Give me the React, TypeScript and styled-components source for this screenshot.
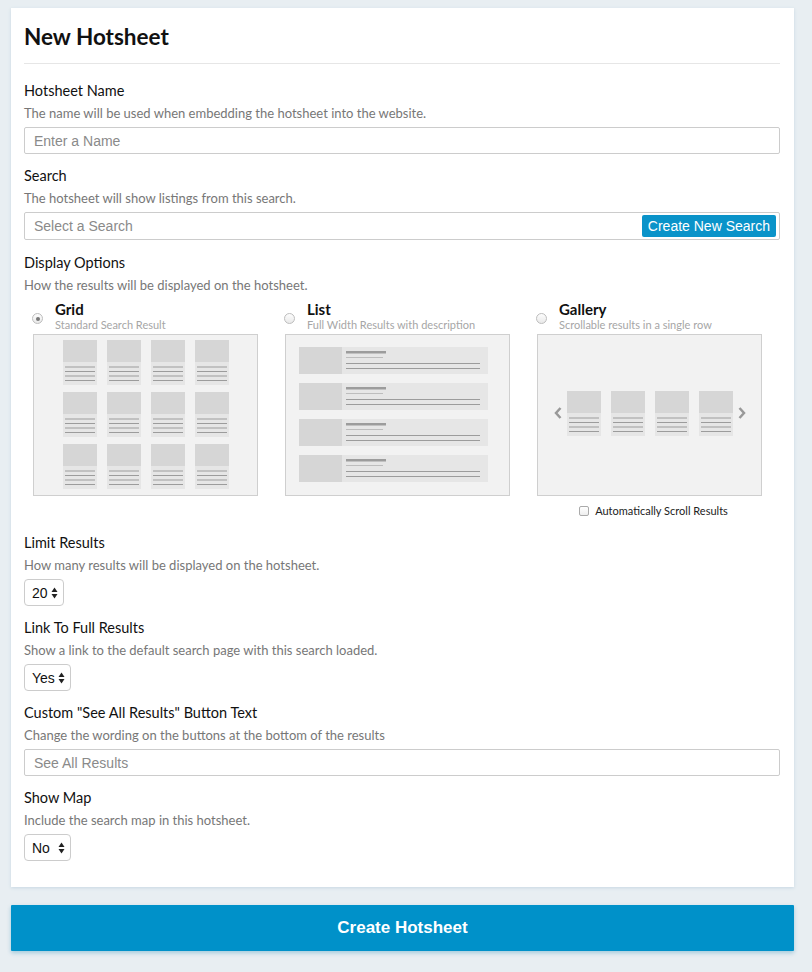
import styled, { createGlobalStyle } from "styled-components";

const GlobalStyle = createGlobalStyle`
  body {
    margin: 0;
    background: #e8eef2;
    font-family: Lato, "Noto Sans", sans-serif;
    color: #111;
  }
`;

const SANS = `"Liberation Sans", Arial, sans-serif`;

type Layout = "grid" | "list" | "gallery";

const options: { key: Layout; title: string; sub: string }[] = [
  { key: "grid", title: "Grid", sub: "Standard Search Result" },
  { key: "list", title: "List", sub: "Full Width Results with description" },
  { key: "gallery", title: "Gallery", sub: "Scrollable results in a single row" },
];

// one result card in the grid / gallery thumbnails
const Tile = ({ x, y }: { x: number; y: number }) => (
  <g>
    <rect x={x} y={y} width={34} height={22} fill="#d6d6d6" />
    <rect x={x} y={y + 22} width={34} height={23} fill="#e6e6e6" />
    {[27, 31.5, 36, 40.5].map((o) => (
      <line key={o} x1={x + 2} x2={x + 32} y1={y + o} y2={y + o} stroke="#9c9c9c" strokeWidth={1} />
    ))}
  </g>
);

const GridPreview = () => (
  <svg width="223" height="160" viewBox="0 0 223 160">
    {[5, 57, 109].map((y) =>
      [29, 73, 117, 161].map((x) => <Tile key={`${x}-${y}`} x={x} y={y} />)
    )}
  </svg>
);

const ListPreview = () => (
  <svg width="223" height="160" viewBox="0 0 223 160">
    {[12, 48, 84, 120].map((y) => (
      <g key={y}>
        <rect x={13} y={y} width={189} height={27} fill="#e6e6e6" />
        <rect x={13} y={y} width={43} height={27} fill="#d6d6d6" />
        <rect x={60} y={y + 4} width={40} height={2.5} fill="#9c9c9c" />
        <line x1={60} x2={97} y1={y + 10.5} y2={y + 10.5} stroke="#bdbdbd" />
        <line x1={60} x2={194} y1={y + 16.5} y2={y + 16.5} stroke="#9c9c9c" />
        <line x1={60} x2={194} y1={y + 21.5} y2={y + 21.5} stroke="#9c9c9c" />
      </g>
    ))}
  </svg>
);

const GalleryPreview = () => (
  <svg width="223" height="160" viewBox="0 0 223 160">
    <polyline points="22.5,73 18,78 22.5,83" fill="none" stroke="#999" strokeWidth={2.5} />
    <polyline points="201.5,73 206,78 201.5,83" fill="none" stroke="#999" strokeWidth={2.5} />
    {[29, 73, 117, 161].map((x) => (
      <Tile key={x} x={x} y={56} />
    ))}
  </svg>
);

const previews: Record<Layout, () => JSX.Element> = {
  grid: GridPreview,
  list: ListPreview,
  gallery: GalleryPreview,
};

const SelectArrows = () => (
  <svg width="7" height="12" viewBox="0 0 7 12">
    <path d="M3.5 0.5 L6.5 5 L0.5 5 Z" fill="#222" />
    <path d="M3.5 11.5 L6.5 7 L0.5 7 Z" fill="#222" />
  </svg>
);

const FakeSelect = ({ value, width }: { value: string; width: number }) => (
  <SelectBox $width={width}>
    <span>{value}</span>
    <SelectArrows />
  </SelectBox>
);

export default function App() {
  return (
    <>
      <GlobalStyle />
      <Page>
        <Card>
          <Title>New Hotsheet</Title>

          <Field>
            <Label>Hotsheet Name</Label>
            <Desc>The name will be used when embedding the hotsheet into the website.</Desc>
            <TextInput placeholder="Enter a Name" />
          </Field>

          <Field>
            <Label>Search</Label>
            <Desc>The hotsheet will show listings from this search.</Desc>
            <SearchBox>
              <SearchPlaceholder>Select a Search</SearchPlaceholder>
              <NewSearchBtn>Create New Search</NewSearchBtn>
            </SearchBox>
          </Field>

          <Field $extra={1}>
            <Label>Display Options</Label>
            <Desc>How the results will be displayed on the hotsheet.</Desc>
            <OptionRow>
              {options.map((o) => {
                const Preview = previews[o.key];
                return (
                  <Option key={o.key}>
                    <OptionHead>
                      <Radio $checked={o.key === "grid"} />
                      <div>
                        <OptionTitle>{o.title}</OptionTitle>
                        <OptionSub>{o.sub}</OptionSub>
                      </div>
                    </OptionHead>
                    <PreviewBox>
                      <Preview />
                    </PreviewBox>
                    {o.key === "gallery" && (
                      <CheckRow>
                        <CheckBox />
                        Automatically Scroll Results
                      </CheckRow>
                    )}
                  </Option>
                );
              })}
            </OptionRow>
          </Field>

          <Field $extra={2}>
            <Label>Limit Results</Label>
            <Desc>How many results will be displayed on the hotsheet.</Desc>
            <FakeSelect value="20" width={40} />
          </Field>

          <Field>
            <Label>Link To Full Results</Label>
            <Desc>Show a link to the default search page with this search loaded.</Desc>
            <FakeSelect value="Yes" width={47} />
          </Field>

          <Field>
            <Label>Custom "See All Results" Button Text</Label>
            <Desc>Change the wording on the buttons at the bottom of the results</Desc>
            <TextInput placeholder="See All Results" />
          </Field>

          <Field>
            <Label>Show Map</Label>
            <Desc>Include the search map in this hotsheet.</Desc>
            <FakeSelect value="No" width={47} />
          </Field>
        </Card>

        <SubmitBtn>Create Hotsheet</SubmitBtn>
      </Page>
    </>
  );
}

const Page = styled.div`
  padding: 8px 18px 21px 11px;
`;

const Card = styled.div`
  background: #fff;
  padding: 15px 14px 26px 13px;
  box-shadow: 0 1px 3px rgba(160, 190, 210, 0.45);
`;

const Title = styled.h1`
  margin: 0 0 17px;
  padding-bottom: 12px;
  font-size: 22.5px;
  line-height: 28px;
  font-weight: 700;
  color: #111;
  border-bottom: 1px solid #e6e6e6;
`;

const Field = styled.div<{ $extra?: number }>`
  margin-top: ${(p) => 12 + (p.$extra || 0)}px;
`;

const Label = styled.div`
  font-size: 14.5px;
  line-height: 20px;
  color: #111;
`;

const Desc = styled.div`
  margin-top: 3px;
  margin-bottom: 5px;
  font-size: 13px;
  line-height: 18px;
  color: #777;
`;

const TextInput = styled.input`
  box-sizing: border-box;
  display: block;
  width: 100%;
  height: 27px;
  border: 1px solid #ccc;
  border-radius: 2px;
  padding: 0 9px;
  font-family: ${SANS};
  font-size: 14px;
  outline: none;
  &::placeholder {
    color: #8a8a8a;
  }
`;

const SearchBox = styled.div`
  box-sizing: border-box;
  display: flex;
  align-items: center;
  justify-content: space-between;
  height: 28px;
  border: 1px solid #ccc;
  border-radius: 2px;
  padding: 0 3px 0 9px;
`;

const SearchPlaceholder = styled.span`
  font-family: ${SANS};
  font-size: 14px;
  color: #8a8a8a;
`;

const NewSearchBtn = styled.button`
  height: 22px;
  padding: 0 6px;
  border: none;
  border-radius: 2px;
  background: #0a93c9;
  color: #fff;
  font-family: ${SANS};
  font-size: 14px;
`;

const OptionRow = styled.div`
  display: grid;
  grid-template-columns: repeat(3, 225px);
  column-gap: 27px;
  padding-left: 9px;
  margin-top: 7px;
`;

const Option = styled.div`
  display: flex;
  flex-direction: column;
`;

const OptionHead = styled.div`
  display: flex;
  align-items: flex-end;
  gap: 12px;
  margin-left: -1px;
`;

const Radio = styled.span<{ $checked: boolean }>`
  box-sizing: border-box;
  position: relative;
  flex: none;
  width: 11px;
  height: 11px;
  margin-bottom: 7px;
  border-radius: 50%;
  border: 1px solid #bdbdbd;
  background: linear-gradient(#fdfdfd, #e9e9e9);
  &::after {
    content: "";
    display: ${(p) => (p.$checked ? "block" : "none")};
    position: absolute;
    left: 2.5px;
    top: 2.5px;
    width: 4px;
    height: 4px;
    border-radius: 50%;
    background: #777;
  }
`;

const OptionTitle = styled.div`
  font-size: 15px;
  line-height: 16px;
  font-weight: 700;
  color: #111;
`;

const OptionSub = styled.div`
  margin-top: 2px;
  font-size: 11px;
  line-height: 12px;
  color: #a6a6a6;
`;

const PreviewBox = styled.div`
  margin-top: 3px;
  width: 225px;
  height: 162px;
  box-sizing: border-box;
  border: 1px solid #cfcfcf;
  background: #f2f2f2;
  svg {
    display: block;
  }
`;

const CheckRow = styled.label`
  display: flex;
  align-items: center;
  justify-content: center;
  gap: 6px;
  margin-top: 7px;
  padding-left: 8px;
  font-size: 11px;
  line-height: 16px;
  color: #222;
`;

const CheckBox = styled.span`
  box-sizing: border-box;
  width: 10px;
  height: 10px;
  border: 1px solid #aaa;
  border-radius: 2px;
  background: linear-gradient(#fff, #eee);
`;

const SelectBox = styled.div<{ $width: number }>`
  box-sizing: border-box;
  display: flex;
  align-items: center;
  justify-content: space-between;
  width: ${(p) => p.$width}px;
  height: 27px;
  padding: 0 5px 0 7px;
  border: 1px solid #ccc;
  border-radius: 4px;
  background: #fff;
  font-family: ${SANS};
  font-size: 14px;
  color: #111;
`;

const SubmitBtn = styled.button`
  display: block;
  width: 100%;
  height: 46px;
  margin-top: 18px;
  border: none;
  border-radius: 1px;
  background: #0091c9;
  color: #fff;
  font-family: ${SANS};
  font-size: 17px;
  font-weight: 700;
  box-shadow: 0 2px 4px rgba(0, 120, 170, 0.3);
`;
